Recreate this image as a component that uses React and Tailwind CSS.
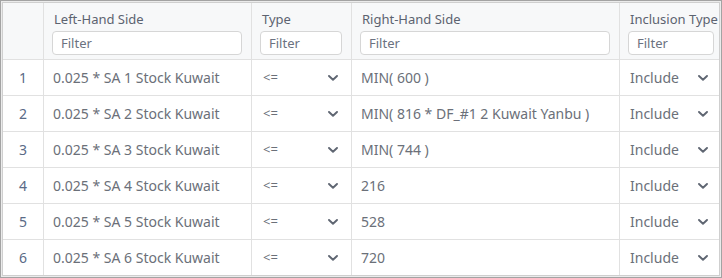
import React from "react";

const rows = [
  ["0.025 * SA 1 Stock Kuwait", "<=", "MIN( 600 )", "Include"],
  ["0.025 * SA 2 Stock Kuwait", "<=", "MIN( 816 * DF_#1 2 Kuwait Yanbu )", "Include"],
  ["0.025 * SA 3 Stock Kuwait", "<=", "MIN( 744 )", "Include"],
  ["0.025 * SA 4 Stock Kuwait", "<=", "216", "Include"],
  ["0.025 * SA 5 Stock Kuwait", "<=", "528", "Include"],
  ["0.025 * SA 6 Stock Kuwait", "<=", "720", "Include"],
];

function Chevron() {
  return (
    <svg width="10" height="6" viewBox="0 0 10 6" className="shrink-0">
      <path d="M1 1 L5 4.8 L9 1" fill="none" stroke="#5f6672" strokeWidth="1.9" strokeLinecap="round" strokeLinejoin="round" />
    </svg>
  );
}

function HeaderCell({ label, w, pl = "pl-[8px]", pr = "pr-[9px]", last }) {
  return (
    <div className={`${w} shrink-0 h-[56px] ${last ? "" : "border-r"} border-[#e1e1e1] ${pl} ${pr} pt-[7px] flex flex-col overflow-hidden`}>
      <div className="h-[18px] leading-[18px] text-[13px] text-[#5c6370] pl-[2px] whitespace-nowrap">{label}</div>
      <div className="mt-[3px] h-[24px] w-full shrink-0 rounded-[4px] border border-[#d6d6d6] bg-white pl-[8px] text-[13px] leading-[22px] text-[#6b7280]">
        Filter
      </div>
    </div>
  );
}

export default function App() {
  return (
    <div className="w-[722px] h-[278px] border border-[#a3a3a3] bg-[#ebebeb] p-[1px] overflow-hidden" style={{ fontFamily: '"Noto Sans", "Open Sans", sans-serif' }}>
      <div className="relative w-[718px] h-[274px] border border-[#cfcfcf] bg-white overflow-hidden">
        <div className="absolute left-[60px] top-[-2px] h-[2px] w-[33px] bg-[#c9d3ea]" />
        <div className="absolute left-[322px] top-[-2px] h-[2px] w-[286px] bg-[#c9d3ea]" />
        <div className="flex border-b border-[#e1e1e1] bg-[#f7f8f9]">
          <div className="w-[41px] shrink-0 h-[56px] border-r border-[#e1e1e1]" />
          <HeaderCell label="Left-Hand Side" w="w-[208px]" />
          <HeaderCell label="Type" w="w-[100px]" />
          <HeaderCell label="Right-Hand Side" w="w-[268px]" />
          <HeaderCell label="Inclusion Type" w="w-[101px]" pr="pr-[7px]" last />
        </div>
        {rows.map((r, i) => (
          <div key={i} className="flex h-[36px] border-b border-[#e1e1e1] text-[14px] text-[#6b7079]">
            <div className="w-[41px] shrink-0 border-r border-[#e1e1e1] flex items-center justify-center text-[#5a6a86]">{i + 1}</div>
            <div className="w-[208px] shrink-0 border-r border-[#e1e1e1] flex items-center pl-[9px] whitespace-nowrap overflow-hidden">{r[0]}</div>
            <div className="w-[100px] shrink-0 border-r border-[#e1e1e1] flex items-center justify-between pl-[11px] pr-[13px]">
              <span className="text-[13px]">{r[1]}</span>
              <Chevron />
            </div>
            <div className="w-[268px] shrink-0 border-r border-[#e1e1e1] flex items-center pl-[9px] whitespace-nowrap overflow-hidden">{r[2]}</div>
            <div className="w-[101px] shrink-0 flex items-center justify-between pl-[10px] pr-[13px]">
              <span>{r[3]}</span>
              <Chevron />
            </div>
          </div>
        ))}
      </div>
    </div>
  );
}
